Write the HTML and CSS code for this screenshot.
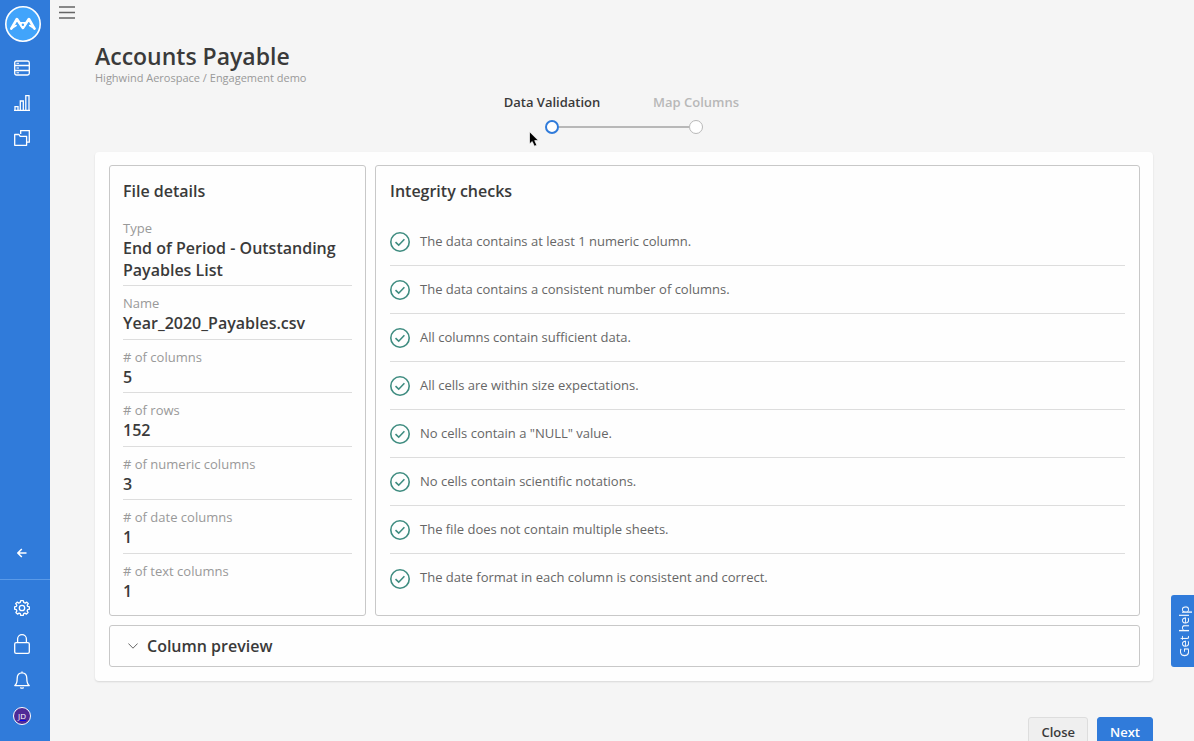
FILE: index.html
```html
<!DOCTYPE html>
<html lang="en">
<head>
  <meta charset="UTF-8" />
  <meta name="viewport" content="width=device-width, initial-scale=1.0" />
  <title>Accounts Payable</title>
  <link rel="stylesheet" href="styles.css">
</head>
<body>
  <nav class="sidebar" aria-label="Main">
    <a href="#" class="logo" aria-label="Home">
      <svg width="36" height="36" viewBox="0 0 36 36" fill="none" stroke="#fff">
        <circle cx="18" cy="18" r="17.2" fill="#41a4fb" stroke-width="1.6"/>
        <path d="M6.3 22.6L11.9 13L17.9 22L23.9 13L29.5 22.6" stroke-width="2.6" stroke-linecap="round" stroke-linejoin="round"/>
        <path d="M6.3 22.6L11 19.6M29.5 22.6L24.8 19.6M14.5 16.8H21.3" stroke-width="1.8" stroke-linecap="round"/>
        <circle cx="17.9" cy="18.8" r="1.9" fill="#41a4fb" stroke-width="1.3"/>
      </svg>
    </a>
    <a href="#" class="nav-link" aria-label="Engagements">
      <svg class="icon" width="16" height="16" viewBox="0 0 16 16">
        <rect x="0.7" y="1" width="14.6" height="14" rx="1.8"/>
        <path d="M0.7 5.5H15.3M0.7 10.5H15.3"/>
        <path d="M2.5 3.3H5M2.5 8H5M2.5 12.8H5" stroke-width="1"/>
      </svg>
    </a>
    <a href="#" class="nav-link" aria-label="Reports">
      <svg class="icon" width="16" height="16" viewBox="0 0 16 16">
        <path d="M0 15.3H16M1 15.4V11.6H4V15.4M6.3 15.4V6H9.3V15.4M11.8 15.4V0.7H15V15.4"/>
      </svg>
    </a>
    <a href="#" class="nav-link" aria-label="Files">
      <svg class="icon" width="16" height="16" viewBox="0 0 16 16">
        <path d="M6.7 4V0.7H15.3V12.2H12.8"/>
        <path d="M0.7 15.3V4.5H5L6.2 6.3H12.6V15.3Z" stroke-linejoin="round"/>
      </svg>
    </a>
    <button class="nav-link collapse" aria-label="Collapse">
      <svg class="icon" width="10" height="10" viewBox="0 0 10 10">
        <path d="M9.5 5H1M4.8 1L0.9 5L4.8 9" stroke-width="1.5"/>
      </svg>
    </button>
    <div class="nav-bottom">
      <a href="#" class="nav-link" aria-label="Settings">
        <svg class="icon" width="16" height="16" viewBox="0 0 16 16">
          <path d="M6.7 0.7H9.3L9.8 2.5L11.2 3.1L12.8 2.1L14.3 3.7L13.2 5.2L13.6 6.4L15.4 6.8V9.2L13.6 9.7L13.1 10.9L14.1 12.5L12.5 14.1L10.9 13.1L9.7 13.6L9.3 15.3H6.7L6.3 13.6L5.1 13.1L3.5 14.1L1.9 12.5L2.9 10.9L2.4 9.7L0.6 9.2V6.8L2.4 6.4L2.8 5.2L1.7 3.7L3.2 2.1L4.8 3.1L6.2 2.5Z" stroke-linejoin="round"/>
          <circle cx="8" cy="8" r="2.7"/>
        </svg>
      </a>
      <a href="#" class="nav-link" aria-label="Security">
        <svg class="icon" width="16" height="20" viewBox="0 0 16 20">
          <rect x="0.7" y="8.7" width="14.6" height="10.6" rx="1.4"/>
          <path d="M3.6 8.7V5.1A4.4 4.4 0 0 1 12.4 5.1V8.7"/>
        </svg>
      </a>
      <a href="#" class="nav-link" aria-label="Notifications">
        <svg class="icon" width="16" height="18" viewBox="0 0 16 18">
          <path d="M8 0.5V1.8M0.8 14.6C2.6 13.2 3.2 11.5 3.2 7.2C3.2 3.8 5 1.8 8 1.8C11 1.8 12.8 3.8 12.8 7.2C12.8 11.5 13.4 13.2 15.2 14.6ZM6.3 16.4Q8 17.8 9.7 16.4" stroke-linejoin="round"/>
        </svg>
      </a>
      <a href="#" class="nav-link" aria-label="Profile"><span class="avatar">JD</span></a>
    </div>
  </nav>

  <main>
    <button class="menu" aria-label="Menu">
      <svg width="16" height="13" viewBox="0 0 16 13" stroke="#666" stroke-width="1.4">
        <path d="M0 1H16M0 6.5H16M0 12H16"/>
      </svg>
    </button>

    <div class="content">
      <h1>Accounts Payable</h1>
      <p class="subtitle">Highwind Aerospace / Engagement demo</p>

      <ol class="steps">
        <li class="step active">Data Validation</li>
        <li class="step">Map Columns</li>
      </ol>

      <div class="panel">
        <section class="card">
          <h2>File details</h2>
          <dl class="details">
            <div><dt>Type</dt><dd>End of Period - Outstanding Payables List</dd></div>
            <div><dt>Name</dt><dd>Year_2020_Payables.csv</dd></div>
            <div><dt># of columns</dt><dd>5</dd></div>
            <div><dt># of rows</dt><dd>152</dd></div>
            <div><dt># of numeric columns</dt><dd>3</dd></div>
            <div><dt># of date columns</dt><dd>1</dd></div>
            <div><dt># of text columns</dt><dd>1</dd></div>
          </dl>
        </section>

        <section class="card">
          <h2>Integrity checks</h2>
          <ul class="checks">
            <li><svg class="check"><use href="#check"/></svg><span>The data contains at least 1 numeric column.</span></li>
            <li><svg class="check"><use href="#check"/></svg><span>The data contains a consistent number of columns.</span></li>
            <li><svg class="check"><use href="#check"/></svg><span>All columns contain sufficient data.</span></li>
            <li><svg class="check"><use href="#check"/></svg><span>All cells are within size expectations.</span></li>
            <li><svg class="check"><use href="#check"/></svg><span>No cells contain a "NULL" value.</span></li>
            <li><svg class="check"><use href="#check"/></svg><span>No cells contain scientific notations.</span></li>
            <li><svg class="check"><use href="#check"/></svg><span>The file does not contain multiple sheets.</span></li>
            <li><svg class="check"><use href="#check"/></svg><span>The date format in each column is consistent and correct.</span></li>
          </ul>
        </section>

        <button class="preview" aria-expanded="false">
          <svg width="10" height="6" viewBox="0 0 10 6" fill="none" stroke="#666"><path d="M0.4 0.5L5 5.2L9.6 0.5"/></svg>
          Column preview
        </button>
      </div>

      <div class="actions">
        <button class="btn">Close</button>
        <button class="btn primary">Next</button>
      </div>
    </div>
  </main>

  <button class="help">Get help</button>

  <svg class="pointer" width="11" height="17" viewBox="0 0 11 17">
    <path d="M0.5 0.7V13L3.2 10.5L5.4 15.2L7.8 14.2L5.7 9.6H9.4Z" fill="#000" stroke="#fff" stroke-width="0.7"/>
  </svg>

  <svg class="sprite" width="0" height="0" aria-hidden="true">
    <symbol id="check" viewBox="0 0 20 20">
      <circle cx="10" cy="10" r="9.2"/>
      <path d="M5.5 10.2L8.7 13.2L14.4 7.2"/>
    </symbol>
  </svg>
</body>
</html>
```
FILE: styles.css
```css
*, *::before, *::after { box-sizing: border-box; }
body { margin: 0; display: flex; height: 100vh; background: #f5f5f5; color: #3a3a3a; font-family: "Open Sans", sans-serif; font-size: 13px; }
button { font: inherit; color: inherit; cursor: pointer; border: none; background: none; padding: 0; }
h1, h2, p, ol, ul, dl, dd { margin: 0; padding: 0; }
ol, ul { list-style: none; }

/* sidebar */
.sidebar { flex: none; width: 50px; padding: 6px 6px 7px 0; background: #307bda; display: flex; flex-direction: column; }
.logo { height: 36px; margin-bottom: 8px; padding-left: 5px; }
.nav-link { height: 35px; display: flex; align-items: center; justify-content: center; }
.icon { fill: none; stroke: #fff; stroke-width: 1.3; }
.collapse { margin-top: auto; margin-bottom: 9px; }
.nav-bottom { border-top: 1px solid #5a9ae8; padding-top: 10px; margin-right: -6px; padding-right: 6px; }
.nav-bottom .nav-link { height: 36px; }
.avatar { width: 18px; height: 18px; border: 1px solid #fff; border-radius: 50%; background: #4f2a96; color: #fff; font-size: 8px; line-height: 16px; text-align: center; }

/* page */
main { flex: 1; min-width: 0; overflow-y: auto; scrollbar-width: none; }
.menu { display: block; margin: 6px 0 0 9px; height: 13px; }
.menu svg { display: block; }
.content { padding: 21px 41px 24px 45px; }
h1 { font-size: 23px; line-height: 32px; font-weight: 600; }
.subtitle { font-size: 11px; line-height: 12px; color: #999; }

.steps { display: flex; justify-content: center; margin: 9px 0 18px; }
.step { width: 144px; text-align: center; line-height: 18px; font-size: 13px; font-weight: 600; color: #b8b8b8; position: relative; }
.step::after { content: ""; display: block; width: 14px; height: 14px; margin: 9px auto 0; border: 1px solid #b8b8b8; border-radius: 50%; background: #fff; }
.step.active { color: #3a3a3a; }
.step.active::after { border: 2px solid #307bda; }
.step.active::before { content: ""; position: absolute; left: calc(50% + 7px); bottom: 6px; width: calc(100% - 14px); height: 2px; background: #b8b8b8; }

.panel { display: grid; grid-template-columns: 257px 1fr; gap: 9px; padding: 13px 13px 14px 14px; background: #fefefe; border-radius: 4px; box-shadow: 0 1px 2px rgba(0, 0, 0, 0.12); }
.card { display: flex; flex-direction: column; padding: 14px 13px 13px; border: 1px solid #c8c8c8; border-radius: 3px; }
.card + .card { padding: 14px 14px 13px; }
h2 { font-size: 16px; line-height: 22px; font-weight: 600; margin-bottom: 16px; }

.details { flex: 1; display: flex; flex-direction: column; }
.details div { flex: 1 0 auto; padding: 9px 0 4px; border-bottom: 1px solid #ddd; }
.details div:first-child { padding-top: 2px; }
.details div:last-child { padding-bottom: 0; border-bottom: none; }
dt { line-height: 17px; color: #999; }
dd { font-size: 16px; line-height: 22px; font-weight: 600; }

.checks li { display: flex; align-items: center; gap: 10px; height: 48px; padding-top: 1px; border-bottom: 1px solid #ddd; color: #666; }
.checks li:last-child { border-bottom: none; }
.checks span { padding-bottom: 3px; }
.check { width: 20px; height: 20px; fill: none; stroke: #3f8c80; stroke-width: 1.6; }

.preview { grid-column: 1 / -1; display: flex; align-items: center; gap: 9px; height: 42px; padding: 0 18px; border: 1px solid #c8c8c8; border-radius: 3px; font-size: 16px; font-weight: 600; }

.actions { display: flex; justify-content: flex-end; gap: 9px; margin-top: 36px; }
.btn { height: 29px; padding: 0 12px; border: 1px solid #ddd; border-radius: 3px; background: #efefef; font-weight: 600; }
.btn.primary { border-color: #307bda; background: #307bda; color: #fff; }

.help { position: fixed; right: 0; bottom: 74px; width: 23px; height: 72px; padding-right: 3px; border-radius: 0 3px 3px 0; background: #307bda; color: #fff; font-weight: 500; line-height: 20px; writing-mode: vertical-rl; transform: rotate(180deg); }
.pointer { position: absolute; left: 529px; top: 131px; }
.sprite { position: absolute; }
```
